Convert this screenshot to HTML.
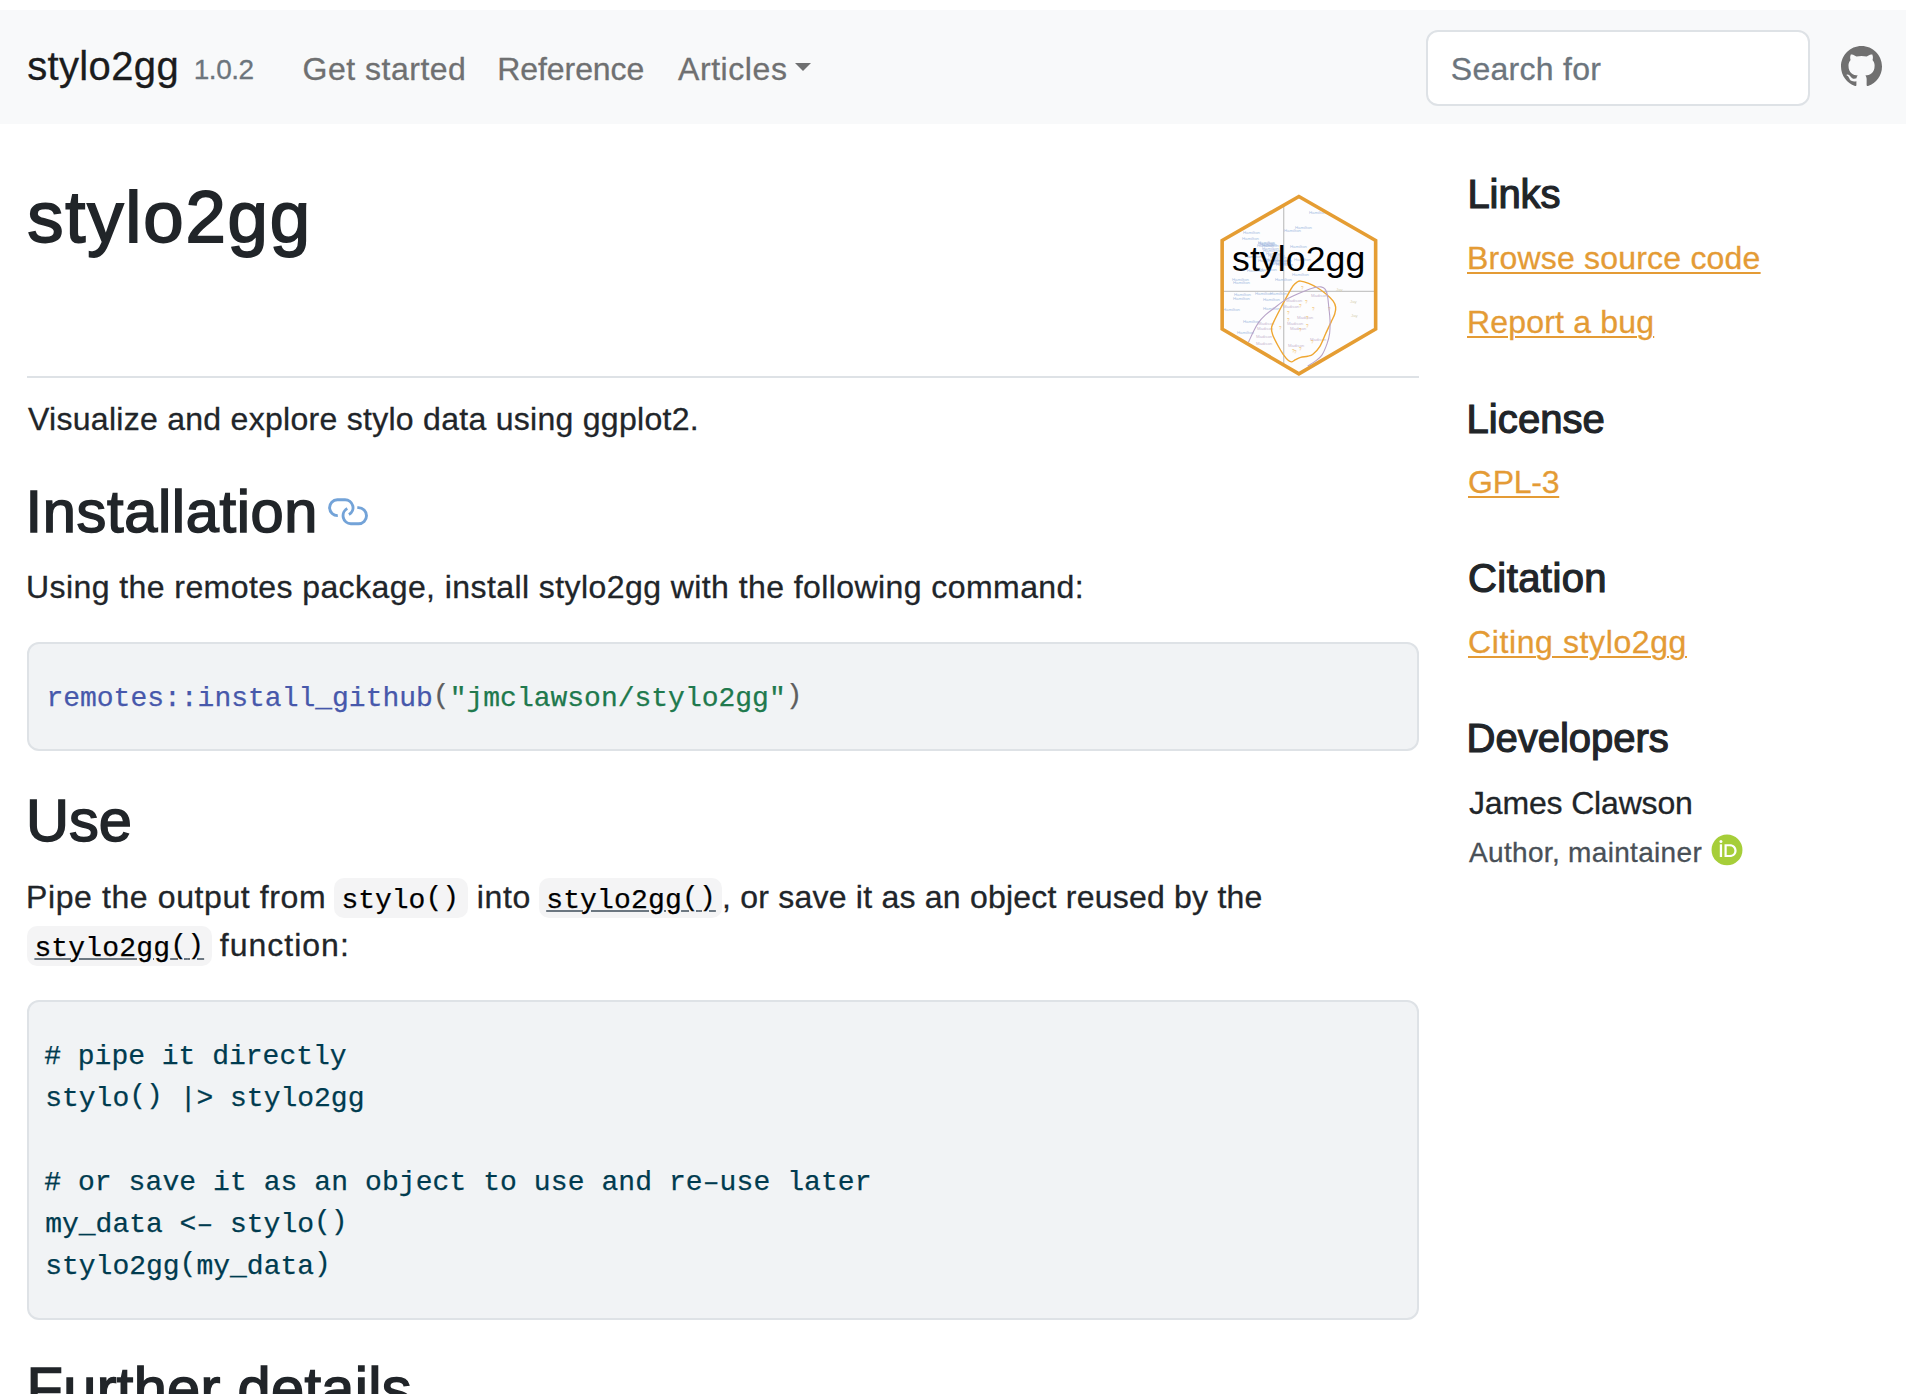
<!DOCTYPE html>
<html><head><meta charset="utf-8"><title>stylo2gg</title>
<style>
html,body{margin:0;padding:0;background:#fff;}
body{width:1906px;height:1394px;overflow:hidden;position:relative;font-family:'Liberation Sans', sans-serif;}
.t{position:absolute;white-space:pre;font-family:'Liberation Sans', sans-serif;}
.b{position:absolute;}
.pr{position:relative;top:-3px;}
</style></head><body>
<div class="b" style="left:0px;top:10px;width:1906px;height:114px;background:#f8f9fa;"></div>
<div class="t" id="brand" style="left:27.20px;top:45.74px;font-size:40px;line-height:40px;color:#1b1c1d;-webkit-text-stroke:0.3px currentColor;letter-spacing:0.357px;">stylo2gg</div>
<div class="t" id="ver" style="left:193.80px;top:55.90px;font-size:28px;line-height:28px;color:#6c757d;-webkit-text-stroke:0.3px currentColor;letter-spacing:-0.500px;">1.0.2</div>
<div class="t" id="nav1" style="left:302.60px;top:52.91px;font-size:32px;line-height:32px;color:#6f7071;-webkit-text-stroke:0.3px currentColor;letter-spacing:0.500px;">Get started</div>
<div class="t" id="nav2" style="left:497.20px;top:52.91px;font-size:32px;line-height:32px;color:#6f7071;-webkit-text-stroke:0.3px currentColor;letter-spacing:-0.060px;">Reference</div>
<div class="t" id="nav3" style="left:678.00px;top:52.91px;font-size:32px;line-height:32px;color:#6f7071;-webkit-text-stroke:0.3px currentColor;letter-spacing:0.570px;">Articles</div>
<div class="b" style="left:795.2px;top:62.8px;width:0;height:0;border-left:8.8px solid transparent;border-right:8.8px solid transparent;border-top:8.8px solid #6f7071;"></div>
<div class="b" style="left:1426px;top:30px;width:384px;height:76px;box-sizing:border-box;border:2px solid #dee2e6;border-radius:12px;background:#fff;"></div>
<div class="t" id="search" style="left:1450.80px;top:53.01px;font-size:32px;line-height:32px;color:#6c757d;-webkit-text-stroke:0.3px currentColor;letter-spacing:0.278px;">Search for</div>
<svg class="b" style="left:1841px;top:46px" width="41" height="41" viewBox="0 0 16 16"><path fill="#707070" d="M8 0C3.58 0 0 3.58 0 8c0 3.54 2.29 6.53 5.47 7.59.4.07.55-.17.55-.38 0-.19-.01-.82-.01-1.49-2.01.37-2.53-.49-2.690-.94-.09-.23-.48-.94-.82-1.13-.28-.15-.68-.52-.01-.53.63-.01 1.08.58 1.23.82.72 1.21 1.87.87 2.33.66.07-.52.28-.87.51-1.07-1.78-.2-3.64-.89-3.64-3.95 0-.87.31-1.59.82-2.15-.08-.2-.36-1.02.08-2.12 0 0 .67-.21 2.2.82.64-.18 1.32-.27 2-.27.68 0 1.36.09 2 .27 1.53-1.04 2.2-.82 2.2-.82.44 1.1.16 1.92.08 2.12.51.56.82 1.27.82 2.15 0 3.07-1.87 3.75-3.65 3.95.29.25.54.73.54 1.48 0 1.07-.01 1.93-.01 2.2 0 .21.15.46.55.38A8.013 8.013 0 0 0 16 8c0-4.42-3.58-8-8-8z"/></svg>
<div class="t" id="h1" style="left:27.20px;top:180.64px;font-size:72.6px;line-height:72.6px;color:#212529;letter-spacing:1.786px;-webkit-text-stroke:1.8px currentColor;">stylo2gg</div>
<div class="b" style="left:27px;top:376px;width:1392px;height:2px;background:#dee2e6;"></div>
<div class="t" id="p1" style="left:28.00px;top:402.81px;font-size:32px;line-height:32px;color:#212529;-webkit-text-stroke:0.3px currentColor;letter-spacing:0.283px;">Visualize and explore stylo data using ggplot2.</div>
<div class="t" id="h2a" style="left:25.60px;top:481.55px;font-size:59.6px;line-height:59.6px;color:#212529;letter-spacing:0.637px;-webkit-text-stroke:1.55px currentColor;">Installation</div>
<svg class="b" style="left:320px;top:490px" width="56" height="44" viewBox="320 490 56 44"><g fill="none" stroke="#73a3d8" stroke-width="2.9"><path d="M337.8 515.6 A7.95 7.95 0 0 1 337.3 499.7 L344.9 499.7 A7.95 7.95 0 0 1 348.9 514.6"/><path d="M347.3 508.6 A8.1 8.1 0 0 0 350.9 523.8 L358.4 523.8 A8.1 8.1 0 0 0 358.4 507.6 L357.3 507.6"/></g></svg>
<div class="t" id="p2" style="left:26.00px;top:570.51px;font-size:32px;line-height:32px;color:#212529;-webkit-text-stroke:0.3px currentColor;letter-spacing:0.423px;">Using the remotes package, install stylo2gg with the following command:</div>
<div class="b" style="left:27px;top:642px;width:1392px;height:109px;box-sizing:border-box;border:2px solid #dee2e6;border-radius:12px;background:#f1f3f5;"></div>
<div class="t" id="code1" style="left:46.40px;top:684.54px;font-size:28px;line-height:28px;color:#003b4f;font-family:'Liberation Mono', monospace;-webkit-text-stroke:0.25px currentColor;letter-spacing:0.000px;"><span style="color:#4758ab">remotes::install_github</span><span style="color:#5e5e5e"><span class="pr">(</span></span><span style="color:#20794d">&quot;jmclawson/stylo2gg&quot;</span><span style="color:#5e5e5e"><span class="pr">)</span></span></div>
<div class="t" id="h2b" style="left:26.00px;top:791.45px;font-size:59.6px;line-height:59.6px;color:#212529;letter-spacing:0.000px;-webkit-text-stroke:1.55px currentColor;">Use</div>
<div class="b" style="left:333.7px;top:878px;width:134px;height:39.5px;background:#f4f4f5;border-radius:10px;"></div>
<div class="b" style="left:539.2px;top:878px;width:183.2px;height:39.5px;background:#f4f4f5;border-radius:10px;"></div>
<div class="b" style="left:27.2px;top:926.4px;width:184.7px;height:39.4px;background:#f4f4f5;border-radius:10px;"></div>
<div class="t" id="pa" style="left:26.00px;top:881.21px;font-size:32px;line-height:32px;color:#212529;-webkit-text-stroke:0.3px currentColor;letter-spacing:0.605px;">Pipe the output from</div>
<div class="t" id="ca" style="left:341.40px;top:886.84px;font-size:28px;line-height:28px;color:#000;font-family:'Liberation Mono', monospace;-webkit-text-stroke:0.25px currentColor;letter-spacing:0.000px;">stylo<span class="pr">(</span><span class="pr">)</span></div>
<div class="t" id="pb" style="left:476.80px;top:881.21px;font-size:32px;line-height:32px;color:#212529;-webkit-text-stroke:0.3px currentColor;letter-spacing:0.667px;">into</div>
<div class="t" id="cb" style="left:546.20px;top:886.84px;font-size:28px;line-height:28px;color:#000;font-family:'Liberation Mono', monospace;-webkit-text-stroke:0.25px currentColor;letter-spacing:0.166px;text-decoration:underline;text-decoration-color:#6c7781;text-decoration-thickness:2px;text-underline-offset:2px;">stylo2gg<span class="pr">(</span><span class="pr">)</span></div>
<div class="t" id="pc" style="left:722.00px;top:881.21px;font-size:32px;line-height:32px;color:#212529;-webkit-text-stroke:0.3px currentColor;letter-spacing:0.223px;">, or save it as an object reused by the</div>
<div class="t" id="cc" style="left:34.40px;top:935.04px;font-size:28px;line-height:28px;color:#000;font-family:'Liberation Mono', monospace;-webkit-text-stroke:0.25px currentColor;letter-spacing:0.167px;text-decoration:underline;text-decoration-color:#6c7781;text-decoration-thickness:2px;text-underline-offset:2px;">stylo2gg<span class="pr">(</span><span class="pr">)</span></div>
<div class="t" id="pd" style="left:219.80px;top:929.41px;font-size:32px;line-height:32px;color:#212529;-webkit-text-stroke:0.3px currentColor;letter-spacing:1.000px;">function:</div>
<div class="b" style="left:27px;top:1000px;width:1392px;height:320px;box-sizing:border-box;border:2px solid #dee2e6;border-radius:12px;background:#f1f3f5;"></div>
<div class="t" id="l1" style="left:44.20px;top:1042.54px;font-size:28px;line-height:28px;color:#003b4f;font-family:'Liberation Mono', monospace;-webkit-text-stroke:0.25px currentColor;"># pipe it directly</div>
<div class="t" id="l2" style="left:45.20px;top:1084.54px;font-size:28px;line-height:28px;color:#003b4f;font-family:'Liberation Mono', monospace;-webkit-text-stroke:0.25px currentColor;">stylo<span class="pr">(</span><span class="pr">)</span> |&gt; stylo2gg</div>
<div class="t" id="l4" style="left:44.20px;top:1168.84px;font-size:28px;line-height:28px;color:#003b4f;font-family:'Liberation Mono', monospace;-webkit-text-stroke:0.25px currentColor;letter-spacing:0.083px;"># or save it as an object to use and re&#8211;use later</div>
<div class="t" id="l5" style="left:45.20px;top:1210.54px;font-size:28px;line-height:28px;color:#003b4f;font-family:'Liberation Mono', monospace;-webkit-text-stroke:0.25px currentColor;">my_data &lt;&#8211; stylo<span class="pr">(</span><span class="pr">)</span></div>
<div class="t" id="l6" style="left:45.20px;top:1252.54px;font-size:28px;line-height:28px;color:#003b4f;font-family:'Liberation Mono', monospace;-webkit-text-stroke:0.25px currentColor;">stylo2gg<span class="pr">(</span>my_data<span class="pr">)</span></div>
<div class="t" id="h2c" style="left:26.60px;top:1359.25px;font-size:59.6px;line-height:59.6px;color:#212529;letter-spacing:0.287px;-webkit-text-stroke:1.55px currentColor;">Further details</div>
<div class="t" id="s1" style="left:1467.50px;top:174.24px;font-size:40px;line-height:40px;color:#212529;letter-spacing:-0.125px;-webkit-text-stroke:1.2px currentColor;">Links</div>
<div class="t" id="s2" style="left:1467.00px;top:242.31px;font-size:32px;line-height:32px;color:#e49b35;-webkit-text-stroke:0.3px currentColor;letter-spacing:0.205px;text-decoration:underline;text-decoration-thickness:2px;text-underline-offset:3px;">Browse source code</div>
<div class="t" id="s3" style="left:1467.00px;top:306.41px;font-size:32px;line-height:32px;color:#e49b35;-webkit-text-stroke:0.3px currentColor;letter-spacing:0.183px;text-decoration:underline;text-decoration-thickness:2px;text-underline-offset:3px;">Report a bug</div>
<div class="t" id="s4" style="left:1466.50px;top:398.84px;font-size:40px;line-height:40px;color:#212529;letter-spacing:0.083px;-webkit-text-stroke:1.2px currentColor;">License</div>
<div class="t" id="s5" style="left:1468.00px;top:466.31px;font-size:32px;line-height:32px;color:#e49b35;-webkit-text-stroke:0.3px currentColor;letter-spacing:-0.250px;text-decoration:underline;text-decoration-thickness:2px;text-underline-offset:3px;">GPL-3</div>
<div class="t" id="s6" style="left:1468.00px;top:557.94px;font-size:40px;line-height:40px;color:#212529;letter-spacing:0.428px;-webkit-text-stroke:1.2px currentColor;">Citation</div>
<div class="t" id="s7" style="left:1468.00px;top:626.11px;font-size:32px;line-height:32px;color:#e49b35;-webkit-text-stroke:0.3px currentColor;letter-spacing:0.608px;text-decoration:underline;text-decoration-thickness:2px;text-underline-offset:3px;">Citing stylo2gg</div>
<div class="t" id="s8" style="left:1466.50px;top:718.04px;font-size:40px;line-height:40px;color:#212529;letter-spacing:0.000px;-webkit-text-stroke:1.2px currentColor;">Developers</div>
<div class="t" id="s9" style="left:1469.00px;top:787.21px;font-size:32px;line-height:32px;color:#212529;-webkit-text-stroke:0.3px currentColor;letter-spacing:-0.166px;">James Clawson</div>
<div class="t" id="s10" style="left:1469.00px;top:838.90px;font-size:28px;line-height:28px;color:#495057;-webkit-text-stroke:0.3px currentColor;letter-spacing:0.323px;">Author, maintainer</div>
<svg class="b" style="left:1710.5px;top:833.8px" width="32" height="32" viewBox="0 0 32 32"><circle cx="16" cy="15.9" r="15.45" fill="#a6ce39"/><rect x="8.8" y="10.3" width="2.3" height="12.7" fill="#fff"/><circle cx="9.95" cy="7.5" r="1.5" fill="#fff"/><path fill="#fff" fill-rule="evenodd" d="M13.5 10.3H18.6C22.8 10.3 25.6 13.0 25.6 16.65C25.6 20.3 22.8 23.0 18.6 23.0H13.5Z M15.7 12.2V21.1H18.6C21.5 21.1 23.4 19.2 23.4 16.65C23.4 14.1 21.5 12.2 18.6 12.2Z"/></svg>
<svg class="b" style="left:1210px;top:185px" width="180" height="200" viewBox="1210 185 180 200"><defs><clipPath id="hc"><polygon points="1298.9,196.5 1375.65,240.5 1375.65,329 1298.9,373.9 1222.15,329 1222.15,240.5"/></clipPath></defs><polygon points="1298.9,196.5 1375.65,240.5 1375.65,329 1298.9,373.9 1222.15,329 1222.15,240.5" fill="#fdfdfe"/><g clip-path="url(#hc)"><line x1="1283.7" y1="190" x2="1283.7" y2="380" stroke="#c6c6c6" stroke-width="1.3"/><line x1="1215" y1="291.4" x2="1385" y2="291.4" stroke="#c6c6c6" stroke-width="1.3"/><text x="1309" y="214" font-family="Liberation Sans" font-size="4.3" fill="#a7bfe2">Hamilton</text><text x="1295" y="229" font-family="Liberation Sans" font-size="4.3" fill="#a7bfe2">Hamilton</text><text x="1284" y="232" font-family="Liberation Sans" font-size="4.3" fill="#a7bfe2">Hamilton</text><text x="1243" y="234" font-family="Liberation Sans" font-size="4.3" fill="#a7bfe2">Hamilton</text><text x="1242" y="240" font-family="Liberation Sans" font-size="4.3" fill="#a7bfe2">Hamilton</text><text x="1258" y="244" font-family="Liberation Sans" font-size="4.3" fill="#a7bfe2">Hamilton</text><text x="1257" y="247" font-family="Liberation Sans" font-size="4.3" fill="#a7bfe2">Hamilton</text><text x="1290" y="248" font-family="Liberation Sans" font-size="4.3" fill="#a7bfe2">Hamilton</text><text x="1245" y="258" font-family="Liberation Sans" font-size="4.3" fill="#a7bfe2">Hamilton</text><text x="1258" y="262" font-family="Liberation Sans" font-size="4.3" fill="#a7bfe2">Hamilton</text><text x="1275" y="262" font-family="Liberation Sans" font-size="4.3" fill="#a7bfe2">Hamilton</text><text x="1294" y="261" font-family="Liberation Sans" font-size="4.3" fill="#a7bfe2">Hamilton</text><text x="1247" y="272" font-family="Liberation Sans" font-size="4.3" fill="#a7bfe2">Hamilton</text><text x="1260" y="271" font-family="Liberation Sans" font-size="4.3" fill="#a7bfe2">Hamilton</text><text x="1232" y="281" font-family="Liberation Sans" font-size="4.3" fill="#a7bfe2">Hamilton</text><text x="1233" y="284" font-family="Liberation Sans" font-size="4.3" fill="#a7bfe2">Hamilton</text><text x="1275" y="281" font-family="Liberation Sans" font-size="4.3" fill="#a7bfe2">Hamilton</text><text x="1292" y="276" font-family="Liberation Sans" font-size="4.3" fill="#a7bfe2">Hamilton</text><text x="1255" y="295" font-family="Liberation Sans" font-size="4.3" fill="#a7bfe2">Hamilton</text><text x="1234" y="296" font-family="Liberation Sans" font-size="4.3" fill="#a7bfe2">Hamilton</text><text x="1270" y="295" font-family="Liberation Sans" font-size="4.3" fill="#a7bfe2">Hamilton</text><text x="1233" y="300" font-family="Liberation Sans" font-size="4.3" fill="#a7bfe2">Hamilton</text><text x="1263" y="301" font-family="Liberation Sans" font-size="4.3" fill="#a7bfe2">Hamilton</text><text x="1263" y="310" font-family="Liberation Sans" font-size="4.3" fill="#a7bfe2">Hamilton</text><text x="1243" y="323" font-family="Liberation Sans" font-size="4.3" fill="#a7bfe2">Hamilton</text><text x="1237" y="334" font-family="Liberation Sans" font-size="4.3" fill="#a7bfe2">Hamilton</text><text x="1223" y="311" font-family="Liberation Sans" font-size="4.3" fill="#a7bfe2">Hamilton</text><text x="1258" y="245" font-family="Liberation Sans" font-size="4.3" fill="#9db6de" opacity="0.85">Hamilton</text><text x="1260" y="246" font-family="Liberation Sans" font-size="4.3" fill="#9db6de" opacity="0.85">Hamilton</text><text x="1262" y="247" font-family="Liberation Sans" font-size="4.3" fill="#9db6de" opacity="0.85">Hamilton</text><text x="1263" y="252" font-family="Liberation Sans" font-size="4.3" fill="#9db6de" opacity="0.85">Hamilton</text><text x="1266" y="255" font-family="Liberation Sans" font-size="4.3" fill="#9db6de" opacity="0.85">Hamilton</text><text x="1268" y="257" font-family="Liberation Sans" font-size="4.3" fill="#9db6de" opacity="0.85">Hamilton</text><text x="1270" y="259" font-family="Liberation Sans" font-size="4.3" fill="#9db6de" opacity="0.85">Hamilton</text><text x="1266" y="261" font-family="Liberation Sans" font-size="4.3" fill="#9db6de" opacity="0.85">Hamilton</text><text x="1272" y="262" font-family="Liberation Sans" font-size="4.3" fill="#9db6de" opacity="0.85">Hamilton</text><text x="1274" y="264" font-family="Liberation Sans" font-size="4.3" fill="#9db6de" opacity="0.85">Hamilton</text><text x="1269" y="265" font-family="Liberation Sans" font-size="4.3" fill="#9db6de" opacity="0.85">Hamilton</text><text x="1276" y="266" font-family="Liberation Sans" font-size="4.3" fill="#9db6de" opacity="0.85">Hamilton</text><text x="1262" y="250" font-family="Liberation Sans" font-size="4.3" fill="#9db6de" opacity="0.85">Hamilton</text><text x="1311" y="297" font-family="Liberation Sans" font-size="4.3" fill="#c9bbd2">Madison</text><text x="1286" y="302" font-family="Liberation Sans" font-size="4.3" fill="#c9bbd2">Madison</text><text x="1283" y="308" font-family="Liberation Sans" font-size="4.3" fill="#c9bbd2">Madison</text><text x="1258" y="325" font-family="Liberation Sans" font-size="4.3" fill="#c9bbd2">Madison</text><text x="1257" y="330" font-family="Liberation Sans" font-size="4.3" fill="#c9bbd2">Madison</text><text x="1297" y="319" font-family="Liberation Sans" font-size="4.3" fill="#c9bbd2">Madison</text><text x="1287" y="325" font-family="Liberation Sans" font-size="4.3" fill="#c9bbd2">Madison</text><text x="1290" y="330" font-family="Liberation Sans" font-size="4.3" fill="#c9bbd2">Madison</text><text x="1256" y="338" font-family="Liberation Sans" font-size="4.3" fill="#c9bbd2">Madison</text><text x="1256" y="345" font-family="Liberation Sans" font-size="4.3" fill="#c9bbd2">Madison</text><text x="1310" y="341" font-family="Liberation Sans" font-size="4.3" fill="#c9bbd2">Madison</text><text x="1288" y="347" font-family="Liberation Sans" font-size="4.3" fill="#c9bbd2">Madison</text><text x="1336" y="291" font-family="Liberation Sans" font-size="4.3" fill="#d8d1b4">Jay</text><text x="1350" y="303" font-family="Liberation Sans" font-size="4.3" fill="#d8d1b4">Jay</text><text x="1351" y="317" font-family="Liberation Sans" font-size="4.3" fill="#d8d1b4">Jay</text><text x="1301" y="290" font-family="Liberation Sans" font-size="4.5" fill="#f2bd6a">?</text><text x="1305" y="304" font-family="Liberation Sans" font-size="4.5" fill="#f2bd6a">?</text><text x="1299" y="308" font-family="Liberation Sans" font-size="4.5" fill="#f2bd6a">?</text><text x="1287" y="315" font-family="Liberation Sans" font-size="4.5" fill="#f2bd6a">?</text><text x="1312" y="311" font-family="Liberation Sans" font-size="4.5" fill="#f2bd6a">?</text><text x="1328" y="311" font-family="Liberation Sans" font-size="4.5" fill="#f2bd6a">?</text><text x="1306" y="320" font-family="Liberation Sans" font-size="4.5" fill="#f2bd6a">?</text><text x="1287" y="322" font-family="Liberation Sans" font-size="4.5" fill="#f2bd6a">?</text><text x="1279" y="330" font-family="Liberation Sans" font-size="4.5" fill="#f2bd6a">?</text><text x="1306" y="328" font-family="Liberation Sans" font-size="4.5" fill="#f2bd6a">?</text><text x="1299" y="332" font-family="Liberation Sans" font-size="4.5" fill="#f2bd6a">?</text><text x="1311" y="344" font-family="Liberation Sans" font-size="4.5" fill="#f2bd6a">?</text><text x="1299" y="351" font-family="Liberation Sans" font-size="4.5" fill="#f2bd6a">?</text><text x="1292" y="353" font-family="Liberation Sans" font-size="4.5" fill="#f2bd6a">?</text><text x="1294" y="354" font-family="Liberation Sans" font-size="4.5" fill="#f2bd6a">?</text><path d="M1300.65 281.10 C1302.55 281.33 1305.83 282.29 1308.61 283.39 C1311.39 284.50 1314.43 285.99 1317.33 287.75 C1320.24 289.51 1323.44 291.75 1326.06 293.94 C1328.67 296.13 1331.43 298.71 1333.03 300.90 C1334.63 303.09 1335.38 304.89 1335.66 307.09 C1335.94 309.28 1335.46 311.59 1334.72 314.06 C1333.98 316.53 1332.67 318.70 1331.20 321.89 C1329.73 325.08 1327.76 329.11 1325.88 333.18 C1324.00 337.25 1322.08 342.81 1319.91 346.32 C1317.75 349.82 1314.94 352.58 1312.91 354.23 C1310.87 355.88 1309.76 355.69 1307.72 356.21 C1305.67 356.72 1302.70 356.73 1300.66 357.30 C1298.61 357.87 1296.91 358.86 1295.44 359.62 C1293.98 360.37 1293.06 361.67 1291.89 361.83 C1290.73 361.98 1289.91 361.80 1288.45 360.55 C1287.00 359.29 1284.93 356.81 1283.17 354.31 C1281.41 351.80 1279.65 348.74 1277.91 345.52 C1276.17 342.31 1273.81 337.93 1272.74 335.02 C1271.67 332.11 1271.33 330.25 1271.49 328.06 C1271.65 325.87 1272.31 324.95 1273.70 321.89 C1275.09 318.83 1277.64 313.91 1279.83 309.71 C1282.01 305.51 1284.63 300.62 1286.79 296.68 C1288.95 292.74 1291.07 288.52 1292.80 286.07 C1294.54 283.62 1295.90 282.82 1297.21 281.99 C1298.52 281.16 1298.75 280.86 1300.65 281.10Z" fill="none" stroke="#efa732" stroke-width="1.4"/><path d="M1248.47 342.24 C1249.23 340.62 1251.36 335.76 1252.99 332.52 C1254.63 329.29 1256.22 325.76 1258.30 322.83 C1260.38 319.90 1262.96 317.28 1265.48 314.94 C1268.00 312.60 1269.90 311.39 1273.43 308.76 C1276.95 306.13 1281.51 302.07 1286.63 299.14 C1291.75 296.22 1299.46 293.13 1304.14 291.20 C1308.82 289.27 1311.91 288.29 1314.72 287.57 C1317.52 286.84 1319.19 286.55 1320.96 286.84 C1322.72 287.13 1324.23 287.85 1325.31 289.31 C1326.39 290.76 1326.88 292.61 1327.46 295.57 C1328.04 298.53 1328.35 302.96 1328.78 307.06 C1329.20 311.17 1329.87 315.80 1330.01 320.18 C1330.15 324.56 1330.12 329.41 1329.62 333.36 C1329.12 337.32 1328.31 340.24 1326.99 343.91 C1325.67 347.58 1323.76 352.44 1321.71 355.39 C1319.66 358.35 1317.05 359.87 1314.71 361.64 C1312.38 363.41 1308.88 365.28 1307.71 366.01" fill="none" stroke="#b8a3c8" stroke-width="1.1"/><text x="1232" y="271.2" font-family="Liberation Sans" font-size="35.6" fill="#000" letter-spacing="0.1">stylo2gg</text></g><polygon points="1298.9,196.5 1375.65,240.5 1375.65,329 1298.9,373.9 1222.15,329 1222.15,240.5" fill="none" stroke="#e59d33" stroke-width="3.6" stroke-linejoin="miter"/></svg>
</body></html>
